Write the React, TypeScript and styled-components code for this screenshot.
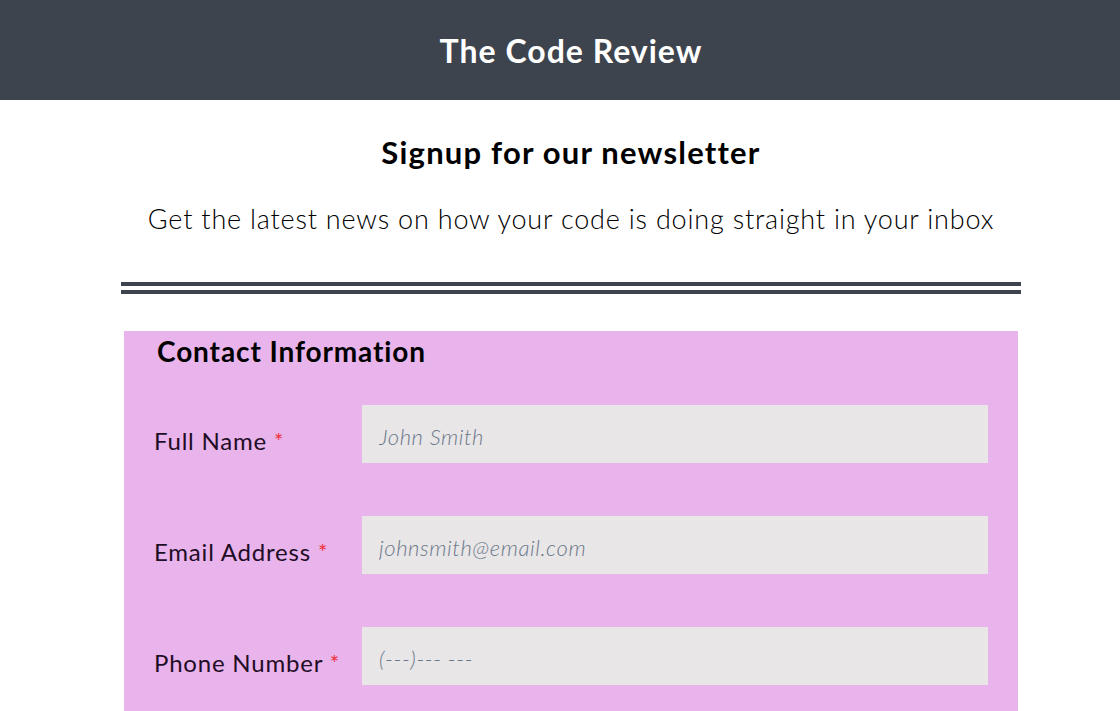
import styled, { createGlobalStyle } from 'styled-components';

const GlobalStyle = createGlobalStyle`
  html, body {
    margin: 0;
    padding: 0;
    overflow: hidden;
    background: #ffffff;
  }
  body {
    font-family: Lato, 'Noto Sans', sans-serif;
  }
`;

type Field = {
  id: string;
  label: string;
  placeholder: string;
  type: string;
};

const fields: Field[] = [
  { id: 'fullName', label: 'Full Name', placeholder: 'John Smith', type: 'text' },
  { id: 'email', label: 'Email Address', placeholder: 'johnsmith@email.com', type: 'email' },
  { id: 'phone', label: 'Phone Number', placeholder: '(---)--- ---', type: 'tel' },
];

export default function App() {
  return (
    <Page>
      <GlobalStyle />
      <Header>
        <Brand>The Code Review</Brand>
      </Header>

      <Main>
        <Title>Signup for our newsletter</Title>
        <Lead>Get the latest news on how your code is doing straight in your inbox</Lead>
        <Divider />

        <SignupForm onSubmit={(e) => e.preventDefault()}>
          <Legend>Contact Information</Legend>
          {fields.map((field) => (
            <FieldRow key={field.id}>
              <FieldLabel htmlFor={field.id}>
                {field.label} <Required>*</Required>
              </FieldLabel>
              <TextInput id={field.id} type={field.type} placeholder={field.placeholder} />
            </FieldRow>
          ))}
        </SignupForm>
      </Main>
    </Page>
  );
}

// page is centred on 1142px, matching the original capture
const Page = styled.div`
  width: 1142px;
  min-height: 711px;
`;

const Header = styled.header`
  height: 100px;
  background: #3d444d;
  display: flex;
  align-items: center;
  justify-content: center;
`;

const Brand = styled.h1`
  margin: 0;
  color: #ffffff;
  font-size: 32px;
  font-weight: 700;
  letter-spacing: 1px;
`;

const Main = styled.main`
  display: flex;
  flex-direction: column;
  align-items: center;
`;

const Title = styled.h2`
  margin: 33px 0 0;
  font-size: 31px;
  line-height: 38px;
  font-weight: 700;
  letter-spacing: 1.2px;
  color: #000000;
`;

const Lead = styled.p`
  margin: 32px 0 0;
  font-size: 27px;
  line-height: 32px;
  font-weight: 300;
  letter-spacing: 0.8px;
  color: #000000;
`;

const Divider = styled.hr`
  width: 900px;
  margin: 47px 0 0;
  border: none;
  border-top: 12px double #3d444d;
  height: 0;
`;

const SignupForm = styled.form`
  width: 894px;
  box-sizing: border-box;
  margin-top: 37px;
  padding: 3px 30px 30px 30px;
  background: #e9b3eb;
  display: flex;
  flex-direction: column;
  gap: 53px;
`;

const Legend = styled.h3`
  margin: 0 0 -16px 3px;
  font-size: 28px;
  line-height: 34px;
  font-weight: 700;
  letter-spacing: 0.9px;
  color: #000000;
`;

const FieldRow = styled.div`
  display: grid;
  grid-template-columns: 208px 626px;
  align-items: center;
`;

const FieldLabel = styled.label`
  padding-top: 12px;
  font-size: 24px;
  font-weight: 400;
  letter-spacing: 0.8px;
  color: #1f0d26;
`;

const Required = styled.span`
  color: #f0303a;
  font-size: 22px;
  vertical-align: 1px;
`;

const TextInput = styled.input`
  height: 58px;
  box-sizing: border-box;
  border: none;
  outline: none;
  background: #e8e6e7;
  padding: 4px 17px 0;
  font-family: Lato, 'Noto Sans', sans-serif;
  font-size: 22px;
  letter-spacing: 0.6px;
  color: #333333;

  &::placeholder {
    color: #6b788a;
    font-style: italic;
    font-weight: 300;
  }
`;
